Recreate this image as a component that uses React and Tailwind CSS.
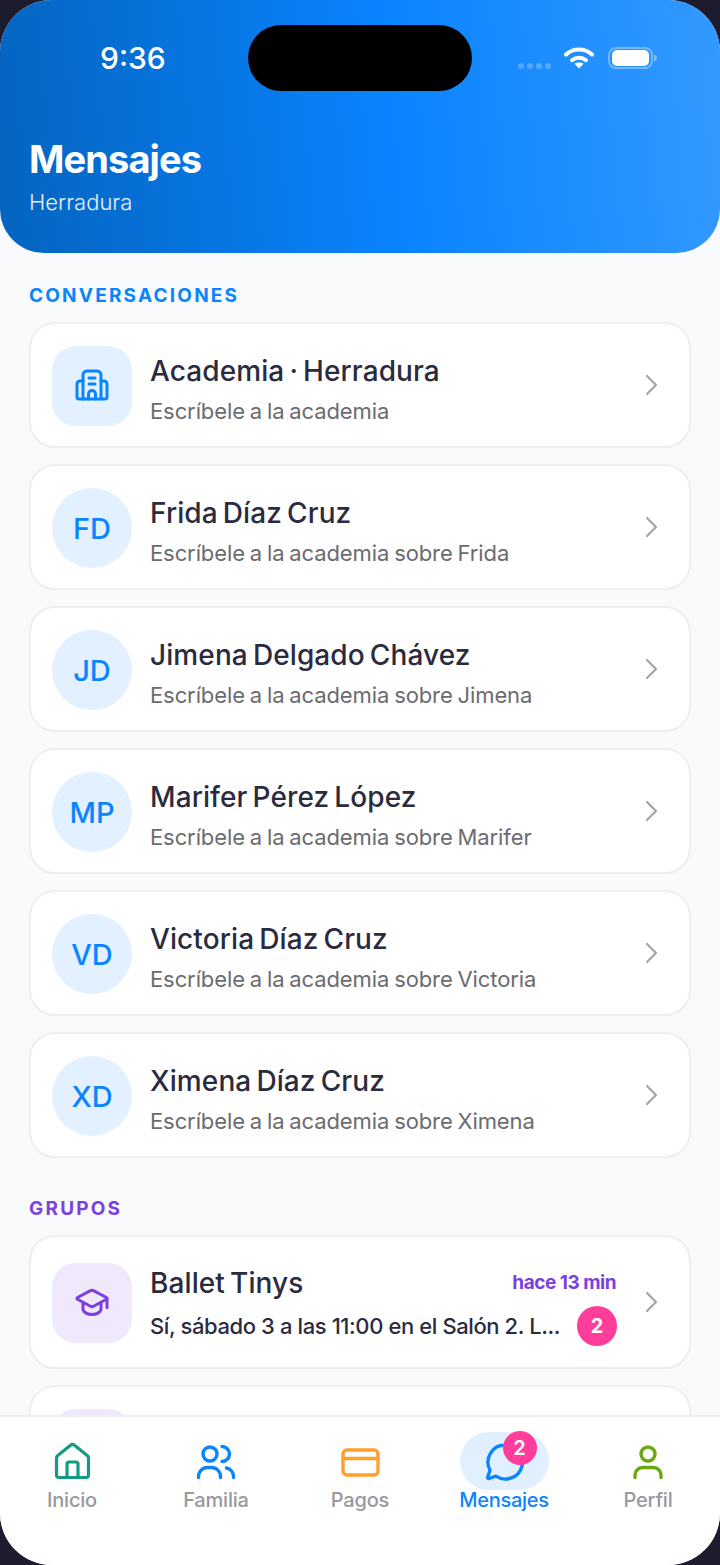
const conversations = [
  { initials: 'FD', name: 'Frida Díaz Cruz', sub: 'Escríbele a la academia sobre Frida' },
  { initials: 'JD', name: 'Jimena Delgado Chávez', sub: 'Escríbele a la academia sobre Jimena' },
  { initials: 'MP', name: 'Marifer Pérez López', sub: 'Escríbele a la academia sobre Marifer' },
  { initials: 'VD', name: 'Victoria Díaz Cruz', sub: 'Escríbele a la academia sobre Victoria' },
  { initials: 'XD', name: 'Ximena Díaz Cruz', sub: 'Escríbele a la academia sobre Ximena' },
];

function Chevron() {
  return (
    <svg width="16" height="24" viewBox="0 0 16 24" fill="none" stroke="#a3a5ad" strokeWidth="2.2" strokeLinecap="round" strokeLinejoin="round" className="shrink-0">
      <path d="M3 3l9 9-9 9" />
    </svg>
  );
}

function BuildingIcon() {
  return (
    <svg width="40" height="40" viewBox="0 0 40 40" fill="none" stroke="#0a84ff" strokeWidth="3" strokeLinecap="round" strokeLinejoin="round">
      <path d="M11 33V9a4 4 0 0 1 4-4h10a4 4 0 0 1 4 4v24" />
      <path d="M11 15H8a3 3 0 0 0-3 3v13a2 2 0 0 0 2 2h26a2 2 0 0 0 2-2V18a3 3 0 0 0-3-3h-3" />
      <path d="M17 12h6M17 18h6M16.5 33v-5a3.5 3.5 0 0 1 7 0v5" />
    </svg>
  );
}

function CapIcon() {
  return (
    <svg width="40" height="40" viewBox="0 0 40 40" fill="none" stroke="#7c3fe0" strokeWidth="3" strokeLinecap="round" strokeLinejoin="round">
      <path d="M18.5 7.6a3 3 0 0 1 3 0l13 6.9a1 1 0 0 1 0 1.8l-13 6.9a3 3 0 0 1-3 0l-13-6.9a1 1 0 0 1 0-1.8z" />
      <path d="M11 20v6c0 3 4 5.5 9 5.500s9-2.500 9-5.500v-6M35 15.500v9" />
    </svg>
  );
}

function ConversationCard({ avatar, square, name, sub }) {
  return (
    <div className="flex h-[126px] items-center rounded-[26px] border-2 border-[#eceef1] bg-white pl-[21px] pr-[29px]">
      <div className={`mt-[1px] flex h-[80px] w-[80px] shrink-0 items-center justify-center bg-[#e2f0ff] text-[29px] font-[550] text-[#0a84ff] ${square ? 'rounded-[24px]' : 'rounded-full pt-[2px]'}`}>
        {avatar}
      </div>
      <div className="ml-[18px] flex min-w-0 flex-1 flex-col pt-[8px]">
        <div className="text-[28px] font-[540] leading-[36px] tracking-[0.1px] text-[#2b2b40] [word-spacing:-2.5px]">{name}</div>
        <div className="mt-[7px] text-[22px] leading-[30px] tracking-[-0.1px] text-[#6b6b70] [word-spacing:-1.2px]">{sub}</div>
      </div>
      <Chevron />
    </div>
  );
}

function NavItem({ label, icon, active, badge }) {
  return (
    <div className="flex flex-col items-center">
      <div className={`relative flex h-[58px] w-[89px] items-center justify-center rounded-full ${active ? 'bg-[#e0f0ff]' : ''}`}>
        {icon}
        {badge && (
          <span className="absolute left-[43px] top-[-1px] flex h-[34px] w-[34px] items-center justify-center rounded-full bg-[#ff3d9a] text-[20px] font-semibold text-white">
            {badge}
          </span>
        )}
      </div>
      <span className={`mt-[-1px] text-[20px] leading-[22px] ${active ? 'font-[550] tracking-[-0.3px] text-[#0a84ff]' : 'font-[450] tracking-[-0.2px] text-[#98989e]'}`}>
        {label}
      </span>
    </div>
  );
}

export default function App() {
  return (
    <div className="h-[1565px] w-[720px] bg-[#1c1c2e] font-['Inter',sans-serif]">
      <div className="flex h-full w-full flex-col overflow-hidden rounded-[52px] bg-[#f8fafb]">
        {/* Header */}
        <header className="relative h-[253px] shrink-0 rounded-b-[44px] bg-[linear-gradient(85deg,#0464bf,#0a84ff_55%,#3399ff)] px-[29px] text-white">
          <div className="absolute left-[248px] top-[25px] h-[66px] w-[224px] rounded-[33px] bg-black" />
          <div className="flex h-[134px] items-start">
            <span className="ml-[71px] mt-[40px] text-[30px] font-medium leading-[36px]">9:36</span>
            <div className="ml-auto mr-[34px] mt-[47px] flex items-start">
              <div className="mr-[13px] mt-[16px] flex gap-[3px]">
                <span className="h-[6px] w-[6px] rounded-full bg-white/25" />
                <span className="h-[6px] w-[6px] rounded-full bg-white/25" />
                <span className="h-[6px] w-[6px] rounded-full bg-white/25" />
                <span className="h-[6px] w-[6px] rounded-full bg-white/25" />
              </div>
              <svg width="30" height="22" viewBox="0 0 30 22" fill="none" stroke="white" strokeWidth="4" strokeLinecap="round" className="mr-[14px]">
                <path d="M2 7.500C9 .8 21 .8 28 7.500" />
                <path d="M8 13.200C12 9.800 18 9.800 22 13.200" />
                <path d="M15 21.500l-4.500-4.800c2.500-1.600 6.500-1.600 9 0z" fill="white" stroke="none" />
              </svg>
              <div className="flex h-[22px] w-[45px] items-center justify-center rounded-[8px] border-2 border-white/35">
                <div className="h-[16px] w-[37px] rounded-[5px] bg-white" />
              </div>
              <div className="ml-[1px] mt-[8px] h-[6px] w-[3px] rounded-r-full bg-white/40" />
            </div>
          </div>
          <h1 className="text-[38px] font-bold leading-[50px] tracking-[-0.9px]">Mensajes</h1>
          <p className="mt-[5px] text-[22px] font-light leading-[26px] tracking-[0px] text-white/90">Herradura</p>
        </header>

        {/* Lista */}
        <main className="min-h-0 flex-1 overflow-hidden px-[29px] pt-[31px]">
          <h2 className="mb-[14px] text-[19px] font-bold leading-[24px] tracking-[2.2px] text-[#0a84ff]">CONVERSACIONES</h2>
          <div className="flex flex-col gap-[16px]">
            <ConversationCard square avatar={<BuildingIcon />} name="Academia · Herradura" sub="Escríbele a la academia" />
            {conversations.map((c) => (
              <ConversationCard key={c.initials} avatar={c.initials} name={c.name} sub={c.sub} />
            ))}
          </div>

          <h2 className="mb-[14px] mt-[39px] text-[19px] font-bold leading-[24px] tracking-[2.2px] text-[#7c3fe0]">GRUPOS</h2>
          <div className="flex flex-col gap-[16px]">
            <div className="flex h-[134px] items-center rounded-[26px] border-2 border-[#eceef1] bg-white pl-[21px] pr-[29px]">
              <div className="mt-[1px] flex h-[80px] w-[80px] shrink-0 items-center justify-center rounded-[24px] bg-[#efe9fb]">
                <CapIcon />
              </div>
              <div className="ml-[18px] mr-[28px] flex min-w-0 flex-1 flex-col pt-[7px]">
                <div className="flex items-center justify-between">
                  <span className="text-[28px] font-[540] leading-[36px] tracking-[0.1px] text-[#2b2b40] [word-spacing:-2.5px]">Ballet Tinys</span>
                  <span className="text-[19px] font-bold leading-[24px] tracking-[-0.5px] text-[#7c3fe0]">hace 13 min</span>
                </div>
                <div className="mt-[5px] flex items-center justify-between">
                  <span className="text-[22px] font-medium leading-[30px] tracking-[-0.4px] text-[#2b2b40]">Sí, sábado 3 a las 11:00 en el Salón 2. L...</span>
                  <span className="mr-[-1px] flex h-[40px] w-[40px] shrink-0 items-center justify-center rounded-full bg-[#ff3d9a] text-[20px] font-bold text-white">2</span>
                </div>
              </div>
              <Chevron />
            </div>
            <div className="h-[134px] rounded-[26px] border-2 border-[#eceef1] bg-white pl-[21px] pt-[22px]">
              <div className="h-[80px] w-[80px] rounded-[24px] bg-[#efe9fb]" />
            </div>
          </div>
        </main>

        {/* Tab bar */}
        <nav className="relative grid h-[150px] shrink-0 grid-cols-5 border-t-2 border-[#eceef1] bg-white pt-[15px]">
          <NavItem
            label="Inicio"
            icon={
              <svg width="40" height="40" viewBox="0 0 40 40" fill="none" stroke="#149a85" strokeWidth="3.2" strokeLinecap="round" strokeLinejoin="round">
                <path d="M7 36.500h27a2.500 2.500 0 0 0 2.500-2.500V17a3 3 0 0 0-1-2.200L22.500 4.200a3 3 0 0 0-4 0L5.500 14.800a3 3 0 0 0-1 2.200V34A2.500 2.500 0 0 0 7 36.500z" />
                <path d="M15 36.500V23a2 2 0 0 1 2-2h7a2 2 0 0 1 2 2v13.500" />
              </svg>
            }
          />
          <NavItem
            label="Familia"
            icon={
              <svg width="40" height="40" viewBox="0 0 40 40" fill="none" stroke="#0a84ff" strokeWidth="3.400" strokeLinecap="round" strokeLinejoin="round">
                <circle cx="14" cy="13" r="7" />
                <path d="M26 5.500a7.500 7.500 0 0 1 0 15" />
                <path d="M2.500 36.500v-1a9 9 0 0 1 9-9h4a9 9 0 0 1 9 9v1" />
                <path d="M30.500 27a8.500 8.500 0 0 1 7 8.500v1" />
              </svg>
            }
          />
          <NavItem
            label="Pagos"
            icon={
              <svg width="40" height="40" viewBox="0 0 40 40" fill="none" stroke="#ff9f2e" strokeWidth="3.400" strokeLinecap="round" strokeLinejoin="round">
                <rect x="3" y="9" width="35" height="25" rx="4" />
                <path d="M3 17.500h35" />
              </svg>
            }
          />
          <NavItem
            active
            badge="2"
            label="Mensajes"
            icon={
              <svg width="40" height="40" viewBox="0 0 40 40" fill="none" stroke="#0a84ff" strokeWidth="3.400" strokeLinecap="round" strokeLinejoin="round">
                <path d="M21 4a17 17 0 0 0-15 25l-2.300 7.300a1 1 0 0 0 1.300 1.200l7-2.400A17 17 0 1 0 21 4z" />
              </svg>
            }
          />
          <NavItem
            label="Perfil"
            icon={
              <svg width="40" height="40" viewBox="0 0 40 40" fill="none" stroke="#6aa80f" strokeWidth="3.400" strokeLinecap="round" strokeLinejoin="round">
                <circle cx="20" cy="13" r="7" />
                <path d="M7 36.500V34a7.500 7.500 0 0 1 7.500-7.500h11A7.500 7.500 0 0 1 33 34v2.500" />
              </svg>
            }
          />
        </nav>
      </div>
    </div>
  );
}
